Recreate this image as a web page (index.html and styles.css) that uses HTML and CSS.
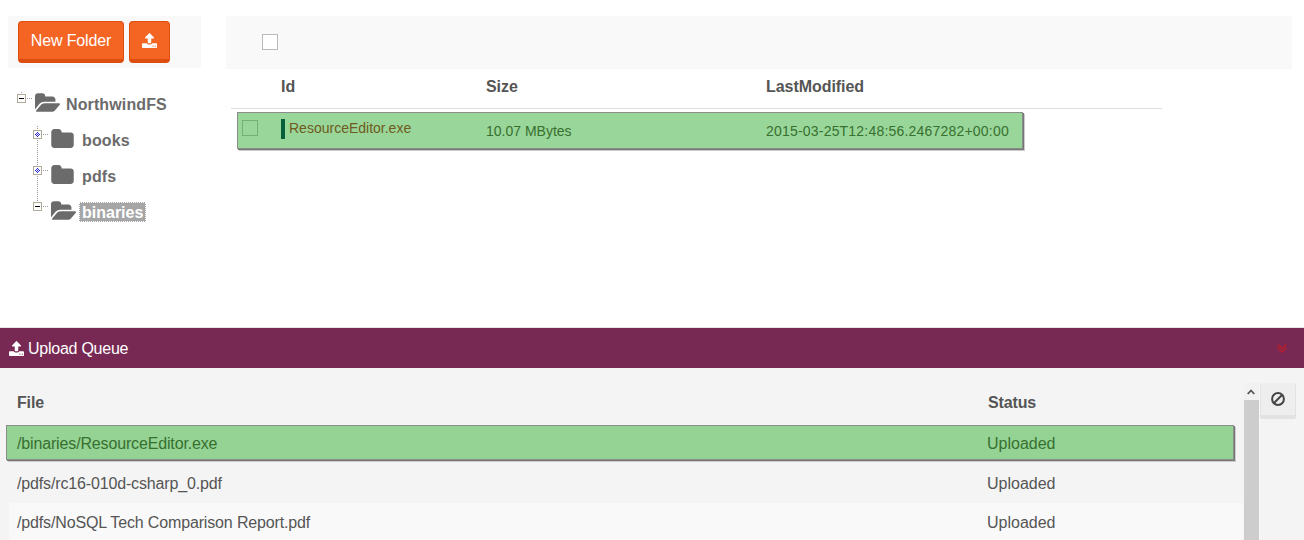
FILE: index.html
```html
<!DOCTYPE html>
<html lang="en">
<head>
<meta charset="utf-8">
<title>NorthwindFS</title>
<link rel="stylesheet" href="styles.css">
</head>
<body>
<svg class="defs" width="0" height="0">
  <symbol id="upload" viewBox="64 64 1664 1600" preserveAspectRatio="none"><path d="M1344 1472q0-26-19-45t-45-19-45 19-19 45 19 45 45 19 45-19 19-45zm256 0q0-26-19-45t-45-19-45 19-19 45 19 45 45 19 45-19 19-45zm128-224v320q0 40-28 68t-68 28h-1472q-40 0-68-28t-28-68v-320q0-40 28-68t68-28h427q21 56 70.500 92t110.500 36h256q61 0 110.500-36t70.500-92h427q40 0 68 28t28 68zm-325-648q-17 40-59 40h-256v448q0 26-19 45t-45 19h-256q-26 0-45-19t-19-45v-448h-256q-42 0-59-40-17-39 14-69l448-448q18-19 45-19t45 19l448 448q31 30 14 69z"/></symbol>
  <symbol id="folder" viewBox="64 128 1664 1408"><path d="M1728 608v704q0 92-66 158t-158 66h-1216q-92 0-158-66t-66-158v-960q0-92 66-158t158-66h320q92 0 158 66t66 158v32h672q92 0 158 66t66 158z"/></symbol>
  <symbol id="folder-open" viewBox="-64 128 1879 1408"><path d="M1815 952q0 31-31 66l-336 396q-43 51-120.500 86.500t-143.500 35.500h-1088q-34 0-60.500-13t-26.500-43q0-31 31-66l336-396q43-51 120.500-86.500t143.500-35.500h1088q34 0 60.500 13t26.500 43zm-343-344v160h-832q-94 0-197 47.500t-164 119.500l-337 396-5 6q0-4-.5-12.500t-.5-12.500v-960q0-92 66-158t158-66h320q92 0 158 66t66 158v32h544q92 0 158 66t66 158z"/></symbol>
  <symbol id="minus" viewBox="0 0 9 9"><path fill="#b0ab98" d="M0 0h9v9H0z"/><path fill="#fff" d="M1 1h7v7H1z"/><path fill="#000" d="M2 4h5v1H2z"/></symbol>
  <symbol id="plus" viewBox="0 0 9 9"><path fill="#b0ab98" d="M0 0h9v9H0z"/><path fill="#fff" d="M1 1h7v7H1z"/><path fill="#22c" d="M4 2h1v1H4zM3 3h1v1H3zM5 3h1v1H5zM2 4h1v1H2zM4 4h1v1H4zM6 4h1v1H6zM3 5h1v1H3zM5 5h1v1H5zM4 6h1v1H4z"/></symbol>
</svg>
<main class="browser">
  <aside class="sidebar">
    <div class="toolbar">
      <button class="btn">New Folder</button>
      <button class="btn btn-icon" aria-label="Upload"><svg class="upload"><use href="#upload"/></svg></button>
    </div>
    <ul class="tree">
      <li class="node root"><svg class="toggle"><use href="#minus"/></svg><i class="dots"></i><svg class="open"><use href="#folder-open"/></svg><span class="label">NorthwindFS</span></li>
      <li>
        <ul class="children">
          <li class="node"><svg class="toggle"><use href="#plus"/></svg><i class="dots"></i><svg class="closed"><use href="#folder"/></svg><span class="label">books</span></li>
          <li class="node"><svg class="toggle"><use href="#plus"/></svg><i class="dots"></i><svg class="closed"><use href="#folder"/></svg><span class="label">pdfs</span></li>
          <li class="node"><svg class="toggle"><use href="#minus"/></svg><i class="dots"></i><svg class="open"><use href="#folder-open"/></svg><span class="label selected">binaries</span></li>
        </ul>
      </li>
    </ul>
  </aside>
  <section class="files">
    <div class="bar"><span class="check"></span></div>
    <div class="grid head"><span></span><b>Id</b><b>Size</b><b>LastModified</b></div>
    <div class="grid file highlight"><span class="check"></span><span class="name">ResourceEditor.exe</span><span class="cell">10.07 MBytes</span><span class="cell date">2015-03-25T12:48:56.2467282+00:00</span></div>
  </section>
</main>
<section class="queue">
  <header class="title"><svg class="upload"><use href="#upload"/></svg><span class="caption">Upload Queue</span>
    <svg class="chevrons" viewBox="0 0 10 9"><path d="M.7 .7 5 4.700 9.300 .7M.7 4 5 8 9.300 4"/></svg></header>
  <div class="panel">
    <div class="table">
      <div class="row thead"><b>File</b><b>Status</b></div>
      <div class="row done highlight"><span class="path">/binaries/ResourceEditor.exe</span><span>Uploaded</span></div>
      <div class="row"><span class="path">/pdfs/rc16-010d-csharp_0.pdf</span><span>Uploaded</span></div>
      <div class="row alt"><span class="path">/pdfs/NoSQL Tech Comparison Report.pdf</span><span>Uploaded</span></div>
    </div>
    <div class="scroll"><svg class="arrow" viewBox="0 0 8 6"><path d="M.7 5 4 1.500 7.300 5"/></svg><div class="thumb"></div></div>
    <button class="clear" aria-label="Clear"><svg class="ban" viewBox="0 0 14 14"><circle cx="7" cy="7" r="5.900"/><path d="M3 11 11 3"/></svg></button>
  </div>
</section>
</body>
</html>
```
FILE: styles.css
```css
* { box-sizing: border-box; }
body { margin: 0; height: 540px; overflow: hidden; background: #fff; color: #555; font: 16px/20px "Liberation Sans", Arial, sans-serif; }
ul { margin: 0; padding: 0; list-style: none; }
svg { display: block; flex: none; fill: currentColor; }
.defs { position: absolute; }
.browser { display: flex; gap: 25px; height: 328px; padding: 16px 12px 0 8px; border-bottom: 1px solid #e6e6e6; }
.sidebar { width: 193px; flex: none; }
.toolbar { display: flex; gap: 5px; height: 52px; padding: 5px 10px; background: #f9f9f9; }
.btn { width: 106px; height: 42px; padding: 0; border: 1px solid #dd4d0e; border-bottom-width: 4px; border-radius: 4px; background: #f46524; color: #fff; font: inherit; letter-spacing: -.15px; white-space: nowrap; }
.btn-icon { display: flex; width: 41px; align-items: center; justify-content: center; }
.upload { width: 15px; height: 15px; }
.tree { padding: 18px 0 0 9px; color: #6b6b6b; font-weight: bold; letter-spacing: .12px; }
.node { display: flex; height: 36px; align-items: flex-start; }
.root { background: linear-gradient(#999, #999) 4px 6px / 1px 1px no-repeat; }
.toggle { width: 9px; height: 9px; margin-top: 8px; }
.dots { width: 6px; height: 1px; margin: 12px 3px 0 0; background: repeating-linear-gradient(90deg, #fff 0 1px, #999 1px 2px); }
.open, .closed { width: 25px; height: 19px; margin-top: 7px; }
.closed { width: 23px; margin-right: 2px; }
.label { margin: 8px 0 0 3px; padding: 1px 3px 0; line-height: 20px; }
.selected { height: 20px; border: 1px dotted #fff; padding: 0 2px; line-height: 20px; background: #a6a6a6; color: #fff; letter-spacing: 0; }
.children { margin-left: 16px; background: repeating-linear-gradient(#999 0 1px, #fff 1px 2px) 4px 4px / 1px 76px no-repeat; }
.files { flex: 1; }
.bar { height: 53px; padding: 18px 0 0 36px; background: #f9f9f9; }
.check { display: block; width: 16px; height: 16px; border: 1px solid #bbb; background: #fff; }
.grid { display: grid; grid-template-columns: 39px 205px 280px 1fr; }
.head { width: 931px; height: 40px; margin-left: 5px; padding: 8px 0 0 11px; border-bottom: 1px solid #ddd; letter-spacing: -.05px; }
.highlight { border: 1px solid #8c8c8c; background: #99d699; box-shadow: 1px 1px 0 #777, 2px 2px 0 #ccc; color: #37702f; }
.file { width: 786px; height: 37px; margin: 3px 0 0 11px; padding: 7px 0 0 4px; font-size: 14px; }
.file .check { border-color: #73b173; background: transparent; }
.name { height: 20px; margin-top: -1px; padding-left: 4px; border-left: 4px solid #085f3b; line-height: 18px; color: #6f5a20; }
.cell { padding-top: 1px; }
.date { letter-spacing: .2px; }
.queue { height: 212px; background: #f4f4f4; }
.title { display: flex; height: 40px; align-items: center; gap: 4px; padding: 0 17px 0 9px; background: #772953; color: #fff; }
.caption { padding-top: 2px; letter-spacing: -.25px; }
.chevrons { width: 10px; height: 9px; margin-left: auto; fill: none; stroke: #b21f32; stroke-width: 1.600; }
.panel { display: flex; height: 172px; padding-top: 15px; }
.table { width: 1244px; }
.row { display: grid; grid-template-columns: 970px 1fr; height: 40px; margin: 0 1px 0 9px; padding: 11px 0 0 8px; }
.path { letter-spacing: -.15px; }
.thead { padding-top: 10px; height: 42px; grid-template-columns: 971px 1fr; letter-spacing: -.15px; }
.done { width: 1228px; height: 35px; margin: 0 0 3px 6px; padding: 8px 0 0 10px; background: #94d394; }
.alt { height: 38px; padding-top: 10px; background: #f9f9f9; }
.scroll { width: 16px; border-right: 1px solid #f8f8f8; background: #f1f1f1; }
.arrow { width: 8px; height: 6px; margin: 6px 0 5px 3px; fill: none; stroke: #555; stroke-width: 1.800; }
.thumb { width: 15px; height: 140px; background: #cdcdcd; }
.clear { display: flex; width: 36px; height: 36px; align-items: center; justify-content: center; padding: 0; border: solid #e2e2e2; border-width: 0 1px 4px 1px; border-radius: 2px; background: #eee; color: #444; }
.ban { width: 14px; height: 14px; fill: none; stroke: currentColor; stroke-width: 2; }
```
